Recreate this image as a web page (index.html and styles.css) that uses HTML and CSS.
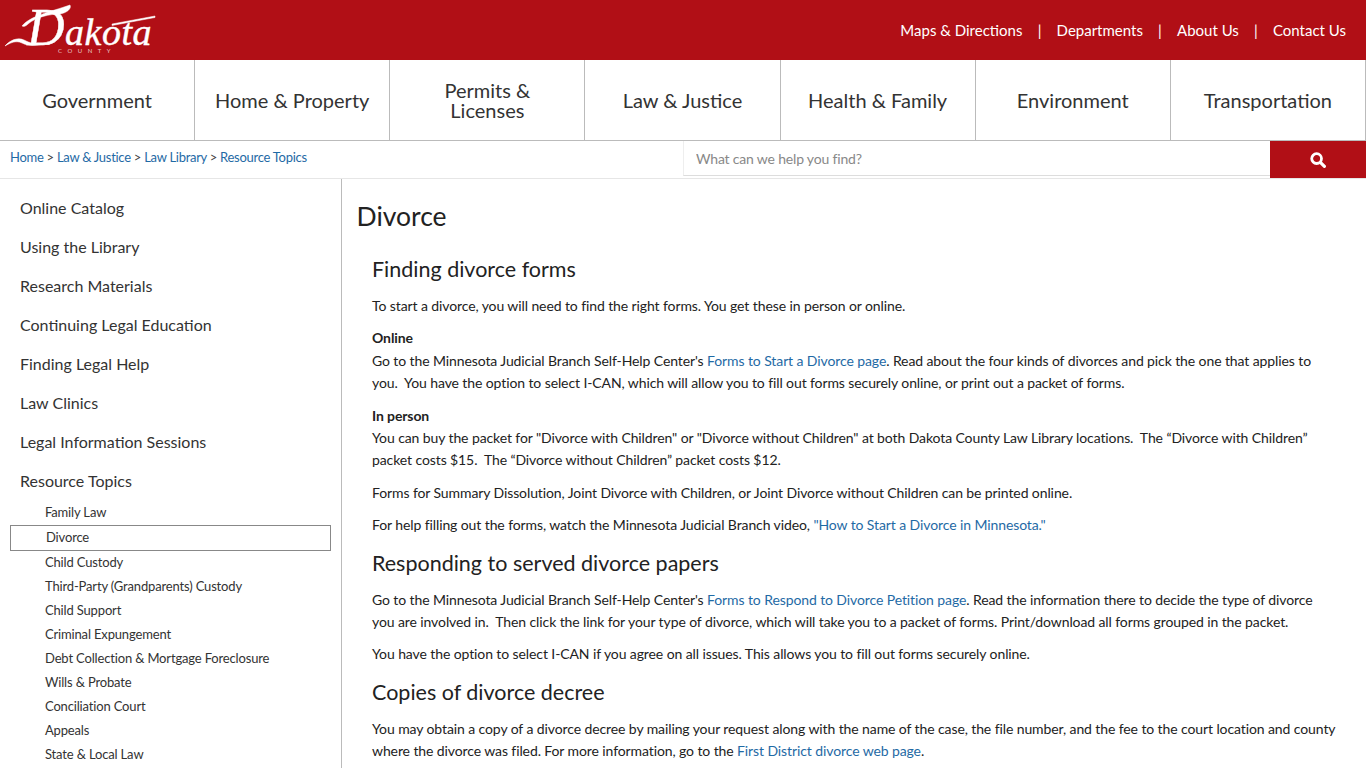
FILE: index.html
```html
<!DOCTYPE html>
<html lang="en">
  <head>
    <meta charset="UTF-8" />
    <title>Divorce</title>
    <link rel="stylesheet" href="styles.css">
  </head>
  <body>
    <header class="topbar">
      <a class="logo" href="#">
        <svg width="160" height="60" viewBox="0 0 160 60">
          <path class="swash" d="M5 46 C10 40 18 37 24 40 C30 43 36 45 44 44 C38 45 30 47 22 43 C16 40 10 43 5 46 Z" />
          <path class="swash" d="M22 26 C30 16 50 12 70 5 C72 9 66 13 60 14 C50 14 36 17 28 24 C26 26 24 27 22 26 Z" />
          <path class="swash" d="M112 24 L155 16 L155 17.5 L112 25.5 Z" />
          <text class="logo-word" x="27" y="45"><tspan class="logo-cap">D</tspan>akota</text>
          <text class="logo-county" x="58" y="53">COUNTY</text>
        </svg>
      </a>
      <nav class="toplinks">
        <a href="#">Maps &amp; Directions</a>
        <span class="sep">|</span>
        <a href="#">Departments</a>
        <span class="sep">|</span>
        <a href="#">About Us</a>
        <span class="sep">|</span>
        <a href="#">Contact Us</a>
      </nav>
    </header>

    <nav class="mainnav">
      <a href="#">Government</a>
      <a href="#">Home &amp; Property</a>
      <a href="#">Permits &amp;<br>Licenses</a>
      <a href="#">Law &amp; Justice</a>
      <a href="#">Health &amp; Family</a>
      <a href="#">Environment</a>
      <a href="#">Transportation</a>
    </nav>

    <div class="crumbrow">
      <div class="crumbs">
        <a href="#">Home</a> &gt; <a href="#">Law &amp; Justice</a> &gt; <a href="#">Law Library</a> &gt; <a href="#">Resource Topics</a>
      </div>
      <form class="search">
        <input class="search-input" type="text" placeholder="What can we help you find?">
        <button class="search-btn" type="button" aria-label="Search">
          <svg width="16" height="16" viewBox="0 0 16 16">
            <circle cx="6.6" cy="6.6" r="4.9" fill="none" stroke="#fff" stroke-width="2.8" />
            <path d="M10.6 10.6 L14.4 14.4" stroke="#fff" stroke-width="3.2" stroke-linecap="round" />
          </svg>
        </button>
      </form>
    </div>

    <div class="page">
      <aside class="sidebar">
        <ul class="side-main">
          <li><a href="#">Online Catalog</a></li>
          <li><a href="#">Using the Library</a></li>
          <li><a href="#">Research Materials</a></li>
          <li><a href="#">Continuing Legal Education</a></li>
          <li><a href="#">Finding Legal Help</a></li>
          <li><a href="#">Law Clinics</a></li>
          <li><a href="#">Legal Information Sessions</a></li>
          <li><a href="#">Resource Topics</a></li>
        </ul>
        <ul class="side-sub">
          <li><a href="#">Family Law</a></li>
          <li class="current"><a href="#">Divorce</a></li>
          <li><a href="#">Child Custody</a></li>
          <li><a href="#">Third-Party (Grandparents) Custody</a></li>
          <li><a href="#">Child Support</a></li>
          <li><a href="#">Criminal Expungement</a></li>
          <li><a href="#">Debt Collection &amp; Mortgage Foreclosure</a></li>
          <li><a href="#">Wills &amp; Probate</a></li>
          <li><a href="#">Conciliation Court</a></li>
          <li><a href="#">Appeals</a></li>
          <li><a href="#">State &amp; Local Law</a></li>
        </ul>
      </aside>

      <main class="content">
        <h1>Divorce</h1>
        <div class="article">
          <h2>Finding divorce forms</h2>
          <p>To start a divorce, you will need to find the right forms. You get these in person or online.</p>
          <p><strong>Online</strong><br>Go to the Minnesota Judicial Branch Self-Help Center's <a href="#">Forms to Start a Divorce page</a>. Read about the four kinds of divorces and pick the one that applies to you.&nbsp; You have the option to select I-CAN, which will allow you to fill out forms securely online, or print out a packet of forms.</p>
          <p><strong>In person</strong><br>You can buy the packet for "Divorce with Children" or "Divorce without Children" at both Dakota County Law Library locations.&nbsp; The “Divorce with Children” packet costs $15.&nbsp; The “Divorce without Children” packet costs $12.</p>
          <p>Forms for Summary Dissolution, Joint Divorce with Children, or Joint Divorce without Children can be printed online.</p>
          <p>For help filling out the forms, watch the Minnesota Judicial Branch video, <a href="#">"How to Start a Divorce in Minnesota."</a></p>
          <h2>Responding to served divorce papers</h2>
          <p>Go to the Minnesota Judicial Branch Self-Help Center's <a href="#">Forms to Respond to Divorce Petition page</a>. Read the information there to decide the type of divorce you are involved in.&nbsp; Then click the link for your type of divorce, which will take you to a packet of forms. Print/download all forms grouped in the packet.</p>
          <p>You have the option to select I-CAN if you agree on all issues. This allows you to fill out forms securely online.</p>
          <h2>Copies of divorce decree</h2>
          <p>You may obtain a copy of a divorce decree by mailing your request along with the name of the case, the file number, and the fee to the court location and county where the divorce was filed. For more information, go to the <a href="#">First District divorce web page</a>.</p>
        </div>
      </main>
    </div>
  </body>
</html>
```

FILE: styles.css
```css
* {
  box-sizing: border-box;
}

html, body {
  height: 768px;
  overflow: hidden;
}

body {
  margin: 0;
  font-family: Lato, "Open Sans", sans-serif;
  color: #222;
  background: #fff;
}

a {
  text-decoration: none;
}

.topbar {
  display: flex;
  justify-content: space-between;
  align-items: center;
  height: 60px;
  background: #b10f16;
}

.logo {
  display: block;
  height: 60px;
}

.swash {
  fill: #fff;
  stroke: #fff;
  stroke-width: .5;
}

.logo-word {
  font-family: "Liberation Serif", serif;
  font-style: italic;
  font-size: 38px;
  letter-spacing: .5px;
  fill: #fff;
  stroke: #fff;
  stroke-width: .4;
}

.logo-cap {
  font-size: 52px;
}

.logo-county {
  font-family: Lato, sans-serif;
  font-size: 6px;
  letter-spacing: 5.5px;
  fill: #e8c4c5;
  stroke: none;
}

.toplinks {
  display: flex;
  align-items: center;
  padding-right: 20px;
  font-size: 15px;
  color: #fff;
}

.toplinks a {
  color: #fff;
}

.sep {
  margin: 0 15.2px;
}

.mainnav {
  display: grid;
  grid-template-columns: repeat(7, 1fr);
  height: 81px;
  border-bottom: 1px solid #bbb;
}

.mainnav a {
  display: flex;
  align-items: center;
  justify-content: center;
  text-align: center;
  font-size: 20px;
  line-height: 20px;
  color: #333;
  border-right: 1px solid #bbb;
}

.crumbrow {
  display: flex;
  justify-content: space-between;
  height: 38px;
  border-bottom: 1px solid #e6e6e6;
}

.crumbs {
  padding: 8px 0 0 10px;
  font-size: 13px;
  letter-spacing: -.28px;
  color: #444;
}

.crumbs a {
  color: #1f6aa5;
}

.search {
  display: flex;
  width: 683px;
  height: 37px;
}

.search-input {
  flex: 1;
  height: 35px;
  padding: 0 12px;
  border: 0;
  border-left: 1px solid #eee;
  border-bottom: 1px solid #ddd;
  outline: 0;
  font-family: Lato, sans-serif;
  font-size: 14px;
  letter-spacing: -.18px;
}

.search-input::placeholder {
  color: #888;
}

.search-btn {
  display: flex;
  align-items: center;
  justify-content: center;
  width: 96px;
  border: 0;
  background: #b10f16;
}

.page {
  display: flex;
  height: 589px;
}

.sidebar {
  flex: none;
  width: 342px;
  padding: 9px 10px 0;
  border-right: 1px solid #bbb;
}

.sidebar ul {
  margin: 0;
  padding: 0;
  list-style: none;
}

.side-main li {
  padding-left: 10px;
  height: 39px;
  line-height: 39px;
  font-size: 16px;
}

.side-main a {
  color: #333;
}

.side-sub li {
  height: 24px;
  padding-left: 35px;
  line-height: 24px;
  font-size: 13px;
  letter-spacing: -.16px;
}

.side-sub a {
  color: #333;
}

.side-sub .current {
  height: 26px;
  margin: 1px 0 -1px;
  padding-left: 35px;
  line-height: 22px;
  border: 1px solid #888;
}

.content {
  flex: 1;
  padding: 0 10px 0 14.5px;
}

h1 {
  margin: 19px 0 0;
  font-size: 26.5px;
  font-weight: 400;
  line-height: 36px;
}

.article {
  padding: 9px 18px 0 15.5px;
  font-size: 14px;
  line-height: 22.4px;
  letter-spacing: -.1px;
}

h2 {
  margin: 12px 0 12px;
  font-size: 21.5px;
  font-weight: 400;
  line-height: 28px;
  letter-spacing: 0;
}

.article p {
  margin: 0 0 10px;
}

.article a {
  color: #1f6aa5;
}

.article strong {
  font-weight: 700;
}
```
